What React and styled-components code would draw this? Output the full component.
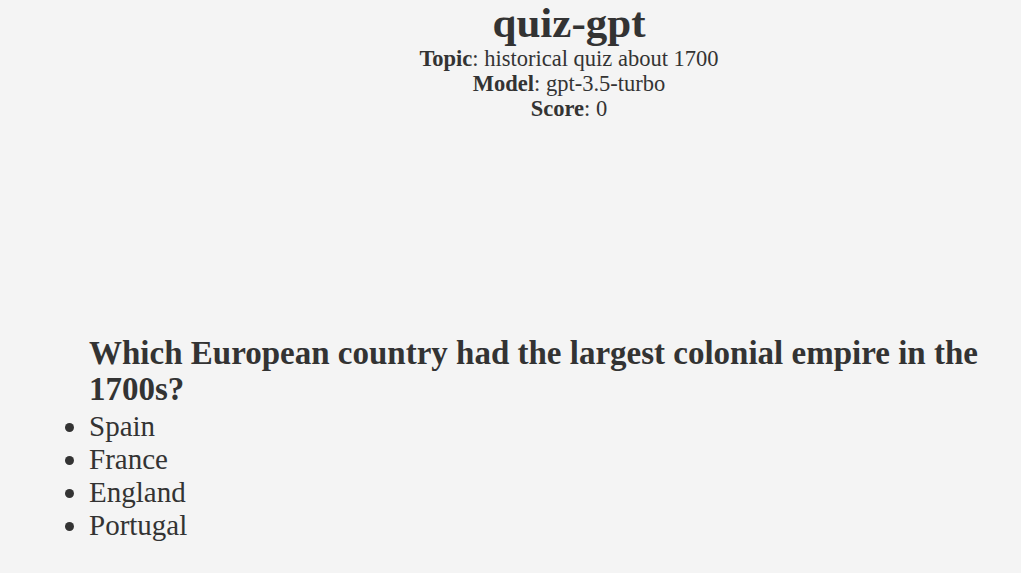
import styled, { createGlobalStyle } from "styled-components";

const GlobalStyle = createGlobalStyle`
	body {
		margin: 0;
		background: #f4f4f4;
		color: #333;
		font-family: "Liberation Serif", "DejaVu Serif", serif;
	}
`;

const quiz = {
	topic: "historical quiz about 1700",
	model: "gpt-3.5-turbo",
	score: 0,
	question: "Which European country had the largest colonial empire in the 1700s?",
	answers: ["Spain", "France", "England", "Portugal"],
};

const App = () => {
	return (
		<Page>
			<GlobalStyle />
			<Header>
				<Title>quiz-gpt</Title>
				<Meta>
					<b>Topic</b>: {quiz.topic}
				</Meta>
				<Meta>
					<b>Model</b>: {quiz.model}
				</Meta>
				<Meta>
					<b>Score</b>: {quiz.score}
				</Meta>
			</Header>
			<Question>
				<h2>{quiz.question}</h2>
				<Answers>
					{quiz.answers.map((a) => (
						<li key={a}>{a}</li>
					))}
				</Answers>
			</Question>
		</Page>
	);
};

export default App;

const Page = styled.main`
	min-height: 573px;
	display: flex;
	flex-direction: column;
	padding-left: 49px;
	box-sizing: border-box;
`;

const Header = styled.header`
	display: flex;
	flex-direction: column;
	align-items: center;
	padding-left: 68px;
`;

const Title = styled.h1`
	margin: 0;
	font-size: 43px;
	line-height: 46px;
	font-weight: 700;
`;

const Meta = styled.div`
	font-size: 22.5px;
	line-height: 25px;
	b {
		font-weight: 700;
	}
`;

const Question = styled.section`
	margin-top: 214px;
	h2 {
		margin: 0 0 3px 40px;
		font-size: 33px;
		line-height: 36px;
		font-weight: 700;
		max-width: 940px;
	}
`;

const Answers = styled.ul`
	margin: 0;
	padding-left: 40px;
	font-size: 29px;
	line-height: 33px;
`;
